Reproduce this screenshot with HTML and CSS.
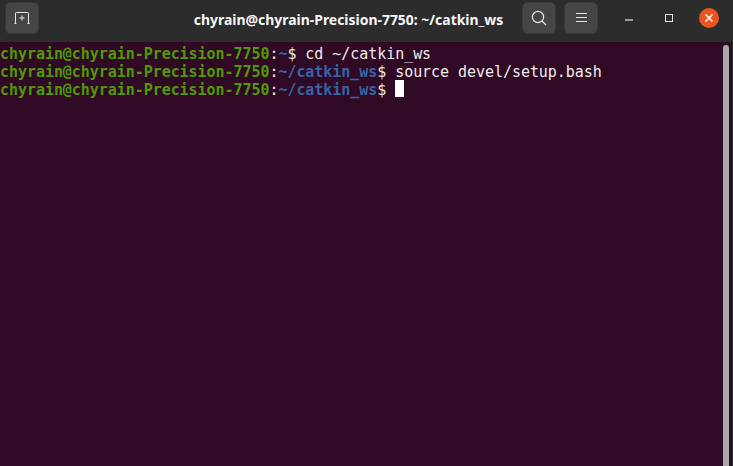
FILE: index.html
```html
<!DOCTYPE html>
<html lang="en">
<head>
<meta charset="utf-8">
<title>Terminal</title>
<link rel="stylesheet" href="styles.css">
</head>
<body>
<div class="window">
  <header class="titlebar">
    <div class="btn new-tab">
      <svg width="16" height="12" viewBox="0 0 16 12" fill="none" stroke="#e6e6e6" stroke-width="1"><path d="M1.5 11V1.2Q1.5 0.5 2.3 0.5H13.7Q14.5 0.5 14.5 1.2V11M0.5 11.5H2.5M13.5 11.5H15.5"/><path d="M8 3.5V8.5M5.5 6H10.5"/></svg>
    </div>
    <div class="title">chyrain@chyrain-Precision-7750: ~/catkin_ws</div>
    <div class="btn search">
      <svg width="16" height="16" viewBox="0 0 16 16" fill="none" stroke="#e6e6e6" stroke-width="1.2"><circle cx="7" cy="7" r="5.6"/><path d="M11 11L15 15"/></svg>
    </div>
    <div class="btn menu">
      <svg width="11" height="10" viewBox="0 0 11 10" fill="none" stroke="#e6e6e6" stroke-width="1"><path d="M0 0.5H11M0 4.5H11M0 8.5H11"/></svg>
    </div>
    <div class="controls">
      <svg class="min" width="8" height="2" viewBox="0 0 8 2"><path d="M0 1H8" stroke="#e6e6e6" stroke-width="1.2"/></svg>
      <svg class="max" width="8" height="8" viewBox="0 0 8 8" fill="none"><rect x="0.5" y="0.5" width="7" height="7" stroke="#e6e6e6" stroke-width="1"/></svg>
      <div class="close">
        <svg width="10" height="10" viewBox="0 0 10 10"><path d="M1.5 1.5L8.5 8.5M8.5 1.5L1.5 8.5" stroke="#fff" stroke-width="1.6"/></svg>
      </div>
    </div>
  </header>
  <div class="body">
    <pre class="term"><span class="g">chyrain@chyrain-Precision-7750</span>:<span class="b">~</span>$ cd ~/catkin_ws
<span class="g">chyrain@chyrain-Precision-7750</span>:<span class="b">~/catkin_ws</span>$ source devel/setup.bash
<span class="g">chyrain@chyrain-Precision-7750</span>:<span class="b">~/catkin_ws</span>$ <span class="cursor"> </span></pre>
    <div class="scrolltrack"><div class="thumb"></div></div>
  </div>
</div>
</body>
</html>
```
FILE: styles.css
```css
html, body { margin: 0; padding: 0; height: 100%; overflow: hidden; background: #300a24; }
.window { display: flex; flex-direction: column; height: 466px; width: 733px; }
.titlebar {
  height: 42px; flex: none; box-sizing: border-box; background: #2c2c2c;
  display: flex; align-items: flex-start; padding: 2px 0 0 5px;
}
.btn {
  width: 34px; height: 32px; box-sizing: border-box; background: #454545;
  border: 1px solid #383838; border-radius: 5px;
  display: flex; align-items: center; justify-content: center;
}
.title {
  flex: 1; text-align: center; color: #f6f6f6; align-self: center; margin-top: -5px;
  font: 700 13.95px/1 "Noto Sans", sans-serif; padding-left: 136px;
  white-space: nowrap;
}
.search { margin-right: 8px; }
.controls { display: flex; align-items: center; height: 32px; width: 135px; box-sizing: border-box; padding-left: 27px; }
.min { margin-right: 32px; margin-top: 4px; }
.max { margin-right: 26px; }
.close {
  width: 20px; height: 20px; border-radius: 50%; background: #e95420;
  display: flex; align-items: center; justify-content: center;
}
.body { flex: 1; display: flex; background: #300a24; }
.term {
  flex: 1; margin: 0; padding: 3px 0 0 0; color: #eeeeec; letter-spacing: -0.05px;
  font: 15px/18px "DejaVu Sans Mono", monospace;
}
.g { color: #4e9a06; font-weight: 700; }
.b { color: #3465a4; font-weight: 700; }
.cursor { display: inline-block; width: 9px; height: 17px; margin-top: -1px; background: #fff; vertical-align: top; }
.scrolltrack { width: 10px; flex: none; box-sizing: border-box; padding: 3px 0 0 0; border-right: 1px solid #2c2c2c; }
.thumb { width: 6px; height: 100%; background: #a9a9a9; border-radius: 3px 3px 0 0; }
```
